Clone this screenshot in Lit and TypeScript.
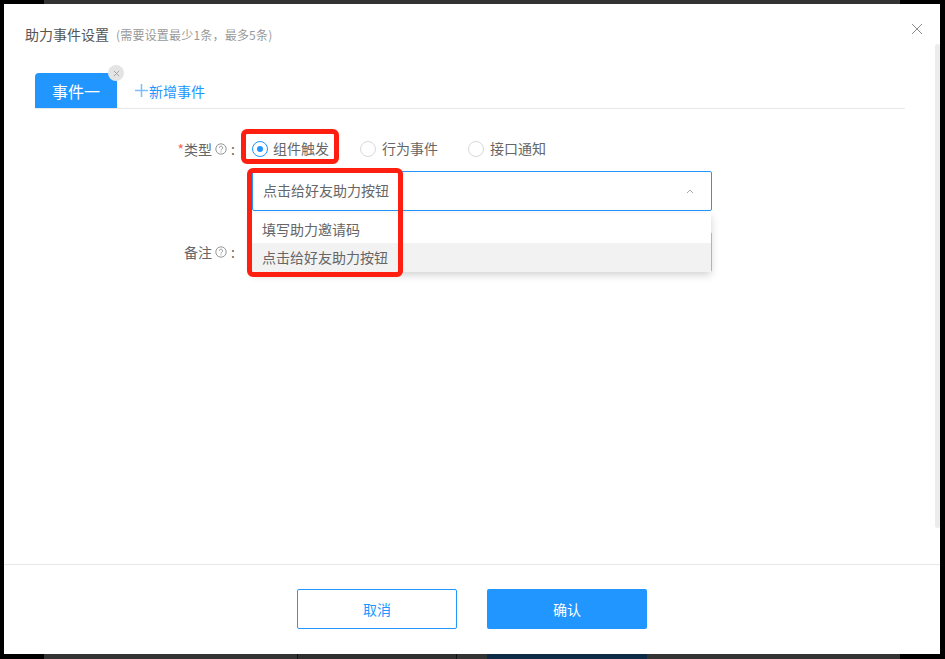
import { LitElement, html, css } from "lit";
import { customElement } from "lit/decorators.js";

const help = html`<svg class="help" viewBox="0 0 12 12" width="12" height="12" fill="none" stroke="#8a8a8a" stroke-width="0.9"><circle cx="6" cy="6" r="5.2"/><path d="M4.4 4.8a1.6 1.6 0 1 1 2.5 1.3c-.6.4-.9.7-.9 1.3"/><path d="M6 8.4v1" /></svg>`;

@customElement("app-root")
export class AppRoot extends LitElement {
  static styles = css`
    :host {
      display: grid;
      grid-template-rows: 4px 650px 5px;
      grid-template-columns: 4px 936px 5px;
      width: 945px;
      height: 659px;
      overflow: hidden;
      background: #000;
      font-family: "Noto Sans CJK SC", "Liberation Sans", sans-serif;
      font-size: 14px;
      color: #666;
    }
    .strip { grid-column: 1 / -1; margin: 0 45px 0 44px; background: #333; }
    .strip.bottom { display: flex; }
    .ghost { height: 5px; box-sizing: border-box; }
    .ghost.a { width: 253px; }
    .ghost.b { width: 160px; border: solid #111; border-width: 0 1px; background: #2f2f2f; }
    .ghost.c { width: 30px; }
    .ghost.d { width: 160px; background: #0d2a47; }
    .side { background: #000; }
    .modal {
      background: #fff;
      display: flex;
      flex-direction: column;
      position: relative;
      min-width: 0;
    }
    .body { flex: 1; position: relative; min-height: 0; padding: 0 35px 0 31px; }
    .title {
      display: flex;
      align-items: baseline;
      gap: 7px;
      height: 20px;
      line-height: 20px;
      margin: 20px 0 0 -10px;
      color: #555;
    }
    .title small { font-size: 12px; color: #999; letter-spacing: 0.2px; }
    .close { position: absolute; top: 19px; right: 17px; width: 12px; height: 12px; }
    .scroll {
      position: absolute;
      top: 40px;
      right: 0;
      width: 5px;
      height: 484px;
      background: #ececec;
      border-radius: 3px;
    }
    .tabs {
      display: flex;
      align-items: flex-end;
      height: 35px;
      margin-top: 29px;
      border-bottom: 1px solid #e8e8e8;
    }
    .tab {
      position: relative;
      width: 82px;
      height: 35px;
      box-sizing: border-box;
      background: #2196ff;
      color: #fff;
      font-size: 16px;
      line-height: 37px;
      text-align: center;
      border-radius: 4px 4px 0 0;
    }
    .tab-x {
      position: absolute;
      top: -8px;
      right: -7px;
      width: 16px;
      height: 16px;
      border-radius: 50%;
      background: #e4e4e4;
      display: flex;
      align-items: center;
      justify-content: center;
    }
    .add {
      display: flex;
      align-items: center;
      gap: 1px;
      margin-left: 18px;
      height: 35px;
      color: #2196ff;
      line-height: 35px;
      padding-top: 1px;
      box-sizing: border-box;
    }
    .add svg { margin-bottom: 1px; }
    .form {
      display: grid;
      grid-template-columns: 202px 460px;
      column-gap: 15px;
      margin-top: 23px;
    }
    .label {
      display: flex;
      align-items: center;
      justify-content: flex-end;
      height: 34px;
      gap: 2px;
      color: #666;
    }
    .label i { color: #f2635d; font-style: normal; margin-right: -2px; }
    .label .colon { width: 8px; text-align: center; }
    .help { display: block; margin-left: 1px; }
    .radios { display: flex; height: 34px; align-items: center; gap: 22px; }
    .radio { display: flex; align-items: center; gap: 6px; width: 86px; white-space: nowrap; line-height: 20px; padding-bottom: 2px; }
    .radio.on { gap: 5px; }
    .dot {
      width: 16px;
      height: 16px;
      box-sizing: border-box;
      flex: none;
      margin-top: 2px;
      border-radius: 50%;
      border: 1px solid #d9d9d9;
      display: flex;
      align-items: center;
      justify-content: center;
    }
    .radio.on .dot { border-color: #2196ff; }
    .radio.on .dot::after {
      content: "";
      width: 6px;
      height: 6px;
      border-radius: 50%;
      background: #2196ff;
    }
    .select {
      position: relative;
      display: flex;
      align-items: center;
      justify-content: space-between;
      box-sizing: border-box;
      height: 40px;
      margin-top: 5px;
      padding: 0 17px 2px 10px;
      border: 1px solid #2196ff;
      border-radius: 2px;
    }
    .select > svg { margin-top: 2px; }
    .menu {
      position: absolute;
      z-index: 2;
      top: 41px;
      left: -1px;
      width: 459px;
      padding-top: 3px;
      background: #fff;
      box-shadow: 0 3px 8px rgba(0, 0, 0, 0.18);
    }
    .opt { height: 27px; line-height: 26px; padding-left: 10px; }
    .opt.sel { height: 29px; line-height: 28px; background: #f2f2f2; }
    .remark-label { height: 40px; margin-top: 21px; }
    .remark {
      box-sizing: border-box;
      height: 40px;
      margin-top: 21px;
      border: 1px solid #c4c4c4;
      border-radius: 2px;
    }
    .footer {
      display: flex;
      justify-content: center;
      gap: 30px;
      box-sizing: border-box;
      height: 90px;
      padding-top: 24px;
      border-top: 1px solid #e8e8e8;
    }
    .btn {
      width: 160px;
      height: 40px;
      box-sizing: border-box;
      line-height: 40px;
      text-align: center;
      border-radius: 2px;
      background: #2196ff;
      color: #fff;
    }
    .btn.plain { background: #fff; color: #2196ff; border: 1px solid #2196ff; line-height: 38px; }
    .mark {
      position: absolute;
      z-index: 3;
      box-sizing: border-box;
      border: 5px solid #ff1f10;
      border-radius: 6px;
      pointer-events: none;
    }
    .mark.m1 { left: 237px; top: 125px; width: 98px; height: 35px; }
    .mark.m2 { left: 243px; top: 164px; width: 156px; height: 109px; }
  `;

  render() {
    return html`
      <div class="strip"></div>
      <div class="side"></div>
      <div class="modal">
        <div class="body">
          <div class="title">助力事件设置<small>(需要设置最少1条，最多5条)</small></div>
          <div class="tabs">
            <div class="tab">
              事件一
              <span class="tab-x">
                <svg viewBox="0 0 8 8" width="7" height="7" fill="none" stroke="#9a9a9a" stroke-width="1"><path d="M1 1l6 6M7 1L1 7"/></svg>
              </span>
            </div>
            <div class="add">
              <svg viewBox="0 0 12 12" width="13" height="13" fill="none" stroke="#7dbdff" stroke-width="1.4"><path d="M6 0v12M0 6h12"/></svg>
              新增事件
            </div>
          </div>
          <div class="form">
            <div class="label"><i>*</i>类型${help}<span class="colon">:</span></div>
            <div>
              <div class="radios">
                <div class="radio on"><span class="dot"></span>组件触发</div>
                <div class="radio"><span class="dot"></span>行为事件</div>
                <div class="radio"><span class="dot"></span>接口通知</div>
              </div>
              <div class="select">
                点击给好友助力按钮
                <svg viewBox="0 0 8 5" width="8" height="5" fill="none" stroke="#a8a8a8" stroke-width="1"><path d="M1 4l3-3 3 3"/></svg>
                <div class="menu">
                  <div class="opt">填写助力邀请码</div>
                  <div class="opt sel">点击给好友助力按钮</div>
                </div>
              </div>
            </div>
            <div class="label remark-label">备注${help}<span class="colon">:</span></div>
            <div><div class="remark"></div></div>
          </div>
          <div class="scroll"></div>
          <svg class="close" viewBox="0 0 12 12" fill="none" stroke="#8c8c8c" stroke-width="1"><path d="M1 1l10 10M11 1L1 11"/></svg>
        </div>
        <div class="footer">
          <div class="btn plain">取消</div>
          <div class="btn">确认</div>
        </div>
        <div class="mark m1"></div>
        <div class="mark m2"></div>
      </div>
      <div class="side"></div>
      <div class="strip bottom">
        <div class="ghost a"></div><div class="ghost b"></div><div class="ghost c"></div><div class="ghost d"></div>
      </div>
    `;
  }
}
